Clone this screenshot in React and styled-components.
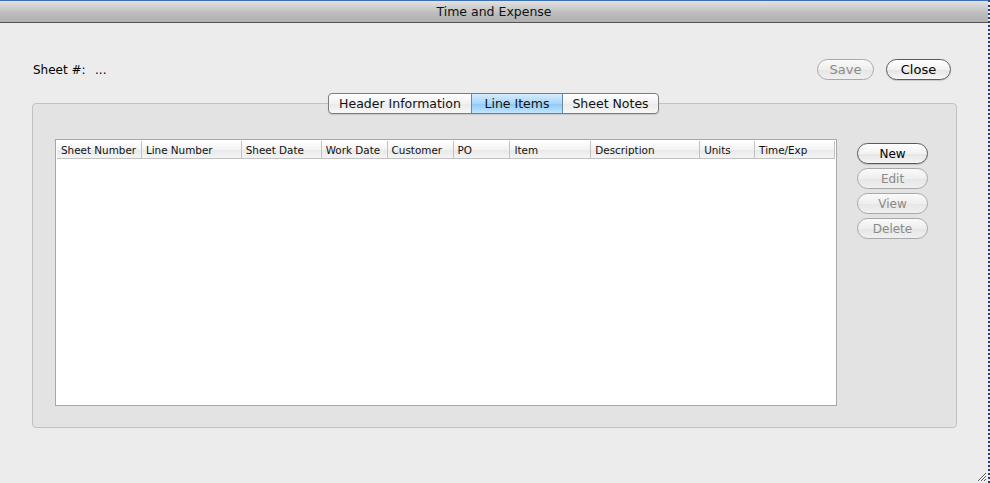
import React from 'react'
import styled, { createGlobalStyle, css } from 'styled-components'

const GlobalStyle = createGlobalStyle`
  html, body { margin: 0; padding: 0; }
  body {
    background: #ececec;
    font-family: "DejaVu Sans", "Liberation Sans", sans-serif;
    color: #000;
  }
`

const Window = styled.div`
  width: 990px;
  height: 483px;
  box-sizing: border-box;
  background: #ececec;
  border-top: 1px solid #3c6fb5;
  border-right: 2px dotted #1e3f78;
  position: relative;
  display: flex;
  flex-direction: column;
  overflow: hidden;
`

const TitleBar = styled.div`
  height: 21px;
  flex: none;
  background: linear-gradient(#e2e2e2, #bcbcbc 60%, #b0b0b0);
  border-bottom: 1px solid #545454;
  display: flex;
  align-items: center;
  justify-content: center;
  font-size: 12.5px;
  color: #111;
`

const Content = styled.div`
  flex: 1;
  padding: 36px 31px 0 32px;
  display: flex;
  flex-direction: column;
`

const TopRow = styled.div`
  height: 21px;
  display: flex;
  align-items: center;
  font-size: 12px;
  padding-left: 1px;
  padding-right: 6px;
  color: #000;
`

const Label = styled.span`
  width: 62px;
`

const Value = styled.span`
  color: #000;
`

const Spacer = styled.div`
  flex: 1;
`

const PillButton = styled.button`
  font-family: inherit;
  font-size: ${p => (p.$small ? '12px' : '13px')};
  height: ${p => p.$h || 21}px;
  width: ${p => p.$w}px;
  border-radius: 11px;
  border: 1px solid #5a5a5a;
  background: linear-gradient(#ffffff, #f2f2f2 50%, #e4e4e4 51%, #f6f6f6);
  color: #000;
  padding: 0;
  margin-left: ${p => p.$ml || 0}px;
  box-shadow: 0 1px 1px rgba(0, 0, 0, 0.15);
  ${p => p.disabled && css`
    border-color: #a9a9a9;
    color: #8a8a8a;
    background: linear-gradient(#fafafa, #eeeeee 50%, #e6e6e6 51%, #f0f0f0);
    box-shadow: none;
  `}
`

const GroupBox = styled.div`
  margin-top: 23px;
  height: 325px;
  box-sizing: border-box;
  border: 1px solid #c2c2c2;
  border-radius: 4px;
  background: #e3e3e3;
  display: flex;
  flex-direction: column;
`

const TabBar = styled.div`
  display: flex;
  justify-content: center;
  margin-top: -11px;
  margin-left: -2px;
`

const Tabs = styled.div`
  display: flex;
  height: 19px;
  border: 1px solid #7c7c7c;
  border-radius: 4px;
  overflow: hidden;
  background: linear-gradient(#ffffff, #f1f1f1 50%, #e9e9e9 51%, #f8f8f8);
  box-shadow: 0 1px 1px rgba(0, 0, 0, 0.12);
`

const Tab = styled.div`
  width: ${p => p.$w}px;
  display: flex;
  align-items: center;
  justify-content: center;
  font-size: 12.5px;
  color: #111;
  ${p => p.$active && css`
    background: linear-gradient(#d5ecfd, #a8d6fa 50%, #8cc8f7 51%, #c2e6fe);
    border-left: 1px solid #6b87a8;
    border-right: 1px solid #6b87a8;
  `}
`

const GroupInner = styled.div`
  flex: 1;
  display: flex;
  padding: 25px 0 21px 22px;
`

const Table = styled.div`
  width: 782px;
  box-sizing: border-box;
  border: 1px solid #a8a8a8;
  background: #fff;
  display: flex;
  flex-direction: column;
  padding: 0 1px;
`

const HeaderRow = styled.div`
  display: flex;
  height: 17px;
  border-top: 1px solid #fff;
  border-bottom: 1px solid #c2c2c2;
  background: linear-gradient(#ffffff, #f3f3f3 50%, #e8e8e8 51%, #f4f4f4);
`

const HeaderCell = styled.div`
  width: ${p => p.$w}px;
  box-sizing: border-box;
  border-right: 1px solid #c2c2c2;
  font-size: 10.4px;
  padding-left: 4px;
  display: flex;
  align-items: center;
  white-space: nowrap;
  overflow: hidden;
  color: #111;
`

const SideButtons = styled.div`
  display: flex;
  flex-direction: column;
  gap: 4px;
  padding-left: 20px;
  padding-top: 4px;
`

const Grip = styled.svg`
  position: absolute;
  right: 1px;
  bottom: 1px;
`

const columns = [
  ['Sheet Number', 85],
  ['Line Number', 100],
  ['Sheet Date', 80],
  ['Work Date', 66],
  ['Customer', 66],
  ['PO', 57],
  ['Item', 81],
  ['Description', 109],
  ['Units', 55],
  ['Time/Exp', 80],
]

export default function App() {
  return (
    <>
      <GlobalStyle />
      <Window>
        <TitleBar>Time and Expense</TitleBar>
        <Content>
          <TopRow>
            <Label>Sheet #:</Label>
            <Value>...</Value>
            <Spacer />
            <PillButton $w={57} disabled>Save</PillButton>
            <PillButton $w={65} $ml={12}>Close</PillButton>
          </TopRow>
          <GroupBox>
            <TabBar>
              <Tabs>
                <Tab $w={142}>Header Information</Tab>
                <Tab $w={90} $active>Line Items</Tab>
                <Tab $w={95}>Sheet Notes</Tab>
              </Tabs>
            </TabBar>
            <GroupInner>
              <Table>
                <HeaderRow>
                  {columns.map(([name, w]) => (
                    <HeaderCell key={name} $w={w}>{name}</HeaderCell>
                  ))}
                </HeaderRow>
              </Table>
              <SideButtons>
                <PillButton $w={71} $h={21} $small>New</PillButton>
                <PillButton $w={71} $h={21} $small disabled>Edit</PillButton>
                <PillButton $w={71} $h={21} $small disabled>View</PillButton>
                <PillButton $w={71} $h={21} $small disabled>Delete</PillButton>
              </SideButtons>
            </GroupInner>
          </GroupBox>
        </Content>
        <Grip width="11" height="11" viewBox="0 0 11 11">
          <path d="M10 2 L2 10 M10 5 L5 10 M10 8 L8 10" stroke="#555" strokeWidth="1" />
          <path d="M10 3 L3 10 M10 6 L6 10 M10 9 L9 10" stroke="#fff" strokeWidth="0.8" />
        </Grip>
      </Window>
    </>
  )
}
